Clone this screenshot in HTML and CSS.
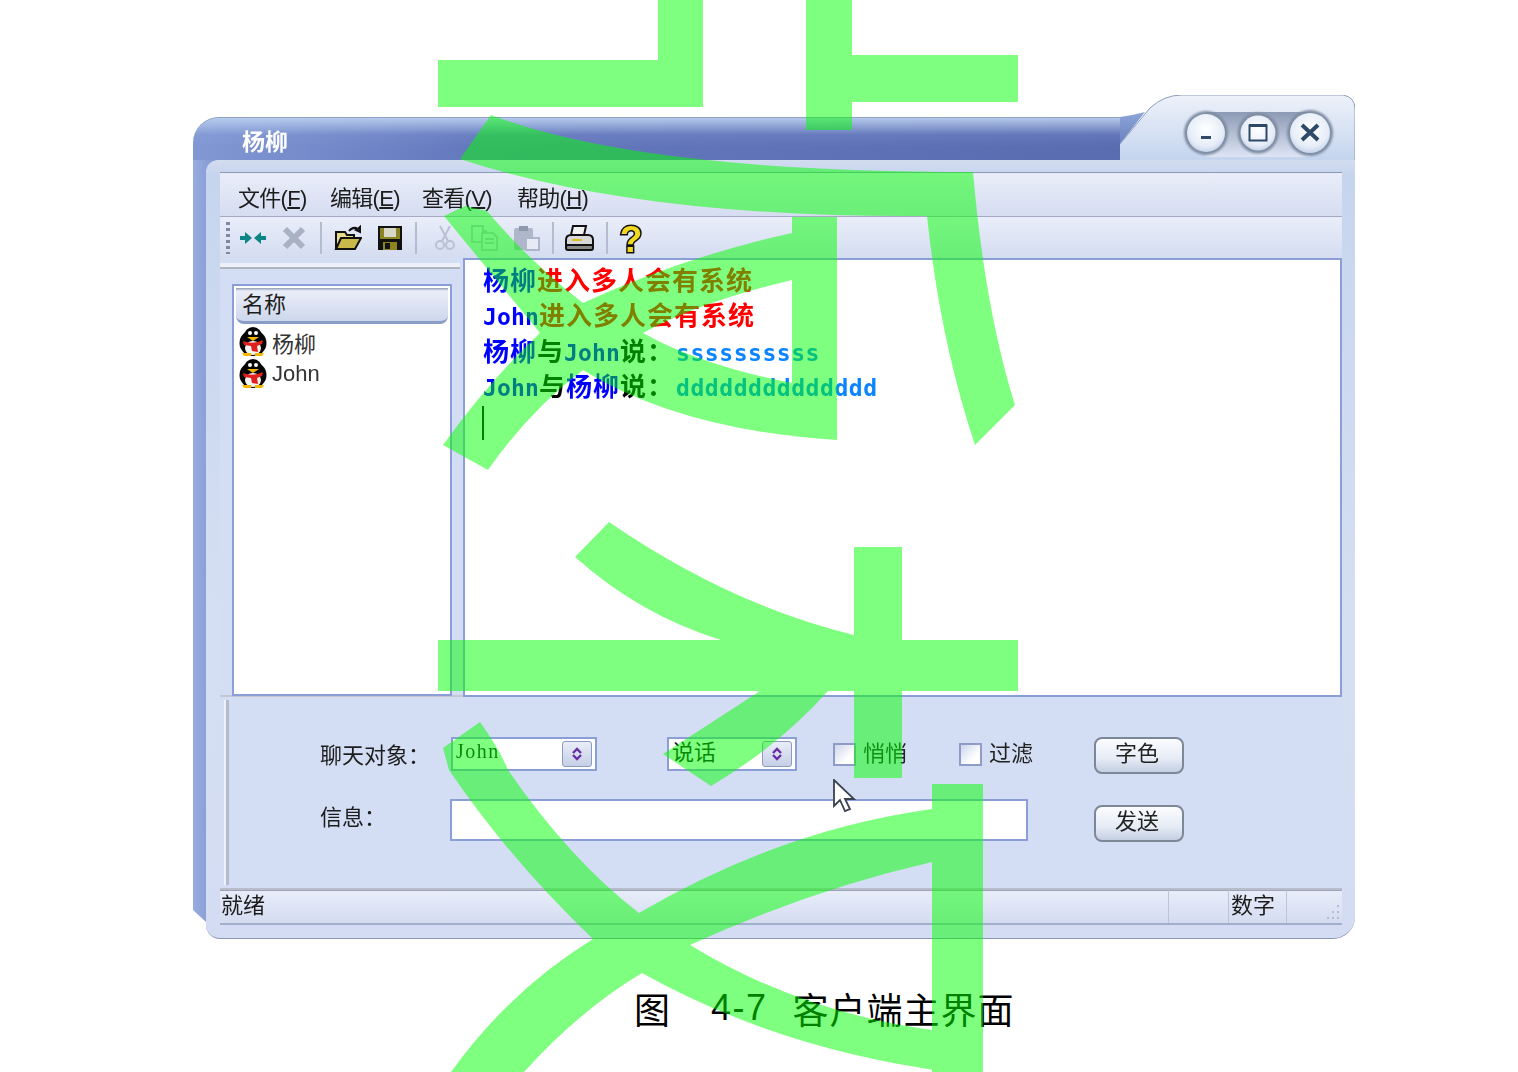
FILE: index.html
```html
<!DOCTYPE html>
<html lang="zh-CN">
<head>
  <meta charset="UTF-8">
  <title>客户端主界面</title>
  <link rel="stylesheet" href="styles.css">
</head>
<body>
  <svg width="0" height="0" class="defs">
    <symbol id="penguin" viewBox="0 0 28 30">
      <ellipse cx="14" cy="16" rx="13.500" ry="13" fill="#050505"/>
      <ellipse cx="14" cy="9" rx="9" ry="9" fill="#050505"/>
      <ellipse cx="14" cy="21" rx="8" ry="7" fill="#f4f4f4"/>
      <circle cx="11" cy="6" r="2" fill="#fff"/>
      <circle cx="17" cy="6" r="2" fill="#fff"/>
      <path d="M8 10h12l-6 4z" fill="#f2b705"/>
      <path d="M4 14q10 4 20-1l-1 4-5 2 1 6-6-1-1-5-7-1z" fill="#e0201c"/>
      <path d="M3 26h9v3H5zM16 26h9l-2 3h-7z" fill="#f2b705"/>
    </symbol>
    <symbol id="spin" viewBox="0 0 12 16">
      <path d="M2 7l4-4 4 4M2 9l4 4 4-4" fill="none" stroke="#6a2fa8" stroke-width="2.4"/>
    </symbol>
  </svg>

  <main class="window">
    <header class="titlebar">
      <div class="title">杨柳</div>
      <svg class="corner" width="235" height="65" viewBox="0 0 235 65">
        <defs>
          <linearGradient id="cornerFill" x1="0" y1="0" x2="0" y2="1">
            <stop offset="0" stop-color="#eef2fa"/>
            <stop offset="1" stop-color="#c4d4ee"/>
          </linearGradient>
          <linearGradient id="cornerBlue" x1="0" y1="0" x2="0" y2="1">
            <stop offset="0" stop-color="#8da6da"/>
            <stop offset="1" stop-color="#5a6cb0"/>
          </linearGradient>
          <linearGradient id="band" x1="0" y1="0" x2="0" y2="1">
            <stop offset="0" stop-color="#8d9ab5"/>
            <stop offset="1" stop-color="#dde5f5"/>
          </linearGradient>
          <radialGradient id="knob" cx=".5" cy=".4" r=".65">
            <stop offset="0" stop-color="#ffffff"/>
            <stop offset=".7" stop-color="#e6edf8"/>
            <stop offset="1" stop-color="#b9cbe6"/>
          </radialGradient>
          <filter id="soft" x="-20%" y="-20%" width="140%" height="140%"><feGaussianBlur stdDeviation="1.200"/></filter>
        </defs>
        <path d="M0 22 Q14 20 25 17 L0 49 V65 H0z" fill="url(#cornerBlue)"/>
        <path d="M0 65 V49 L30 13 Q44 0 62 0 H223 Q235 2 235 14 V65z" fill="url(#cornerFill)"/>
        <path d="M0 49 L30 13 Q44 0 62 0 H223 Q235 2 235 14 V65" fill="none" stroke="#8d9fbd"/>
        <rect x="86" y="17" width="104" height="45" fill="url(#band)"/>
        <g fill="#7f8da3" filter="url(#soft)">
          <circle cx="86" cy="38" r="22"/>
          <circle cx="138" cy="38" r="20.500"/>
          <circle cx="190" cy="38" r="23"/>
        </g>
        <circle cx="86" cy="38" r="19" fill="url(#knob)"/>
        <circle cx="138" cy="38" r="17.500" fill="url(#knob)"/>
        <circle cx="190" cy="38" r="20" fill="url(#knob)"/>
        <rect x="81" y="41" width="10" height="3" fill="#2f4a68"/>
        <rect x="129.500" y="30.500" width="17" height="15" fill="none" stroke="#2f4a68" stroke-width="2"/>
        <rect x="129" y="29" width="18" height="3" fill="#2f4a68"/>
        <path d="M182 30l16 15M198 30l-16 15" stroke="#2f4a68" stroke-width="4"/>
      </svg>
    </header>

    <div class="body">
      <div class="strip"></div>
      <div class="frame">
        <nav class="menubar">
          <span class="menu">文件(<u>F</u>)</span>
          <span class="menu">编辑(<u>E</u>)</span>
          <span class="menu">查看(<u>V</u>)</span>
          <span class="menu menu-last">帮助(<u>H</u>)</span>
        </nav>

        <div class="toolbar">
          <span class="grip"></span>
          <svg class="t-arrows" width="26" height="14" viewBox="0 0 26 14"><path d="M0 5h5V1l7 6-7 6V9H0zM26 5h-5V1l-7 6 7 6V9h5z" fill="#0b8585"/></svg>
          <svg class="t-del" width="24" height="24" viewBox="0 0 24 24"><path d="M3 3l18 18M21 3L3 21" stroke="#a9b2c2" stroke-width="6"/></svg>
          <span class="sep s-1"></span>
          <svg class="t-open" width="28" height="26" viewBox="0 0 28 26"><path d="M2 24V7h9l2 3h7v4" fill="#e8dc8a" stroke="#111" stroke-width="2"/><path d="M2 24l5-11h20l-6 11z" fill="#c9b84a" stroke="#111" stroke-width="2"/><path d="M15 6q4-5 9-2l-2 1 4 2 0-5-2 2" fill="none" stroke="#111" stroke-width="2"/></svg>
          <svg class="t-save" width="26" height="26" viewBox="0 0 26 26"><rect x="1" y="1" width="24" height="24" fill="#111"/><rect x="3" y="3" width="20" height="11" fill="#8c8420"/><rect x="7" y="3" width="12" height="9" fill="#d8d8c8"/><rect x="6" y="17" width="14" height="8" fill="#8c8420"/><rect x="8" y="18" width="5" height="6" fill="#111"/></svg>
          <span class="sep s-2"></span>
          <svg class="t-cut" width="20" height="26" viewBox="0 0 20 26"><path d="M5 1l8 15M15 1L7 16" stroke="#b9c1d2" stroke-width="2"/><circle cx="5" cy="20" r="4" fill="none" stroke="#b9c1d2" stroke-width="2"/><circle cx="15" cy="20" r="4" fill="none" stroke="#b9c1d2" stroke-width="2"/></svg>
          <svg class="t-copy" width="27" height="26" viewBox="0 0 27 26"><path d="M1 1h11v5h3v11H1z" fill="none" stroke="#b9c1d2" stroke-width="2"/><path d="M11 8h11l4 4v13H11z" fill="#dfe4f0" stroke="#b9c1d2" stroke-width="2"/><path d="M14 14h9M14 18h9" stroke="#b9c1d2" stroke-width="2"/></svg>
          <svg class="t-paste" width="27" height="26" viewBox="0 0 27 26"><rect x="1" y="3" width="19" height="22" rx="2" fill="#aeb7c9"/><rect x="6" y="1" width="9" height="5" fill="#8f99ad"/><rect x="13" y="13" width="13" height="12" fill="#e6eaf4" stroke="#aeb7c9" stroke-width="2"/></svg>
          <span class="sep s-3"></span>
          <svg class="t-print" width="30" height="26" viewBox="0 0 30 26"><path d="M9 1h13l-2 9H7z" fill="#f2f2f2" stroke="#111" stroke-width="2"/><path d="M2 15q0-5 5-5h17q5 0 5 5v5H2z" fill="#d8d8d8" stroke="#111" stroke-width="2"/><rect x="2" y="20" width="27" height="5" rx="2" fill="#888" stroke="#111" stroke-width="2"/><rect x="8" y="14" width="10" height="2" fill="#d8c020"/></svg>
          <span class="sep s-4"></span>
          <svg class="t-help" width="24" height="44" viewBox="0 0 24 44"><text x="12" y="35.500" class="help-mark" text-anchor="middle">?</text></svg>
        </div>

        <section class="workspace">
          <aside class="side">
            <div class="sash"></div>
            <div class="list">
              <div class="list-head">名称</div>
              <div class="list-row"><svg class="avatar" width="28" height="30"><use href="#penguin"/></svg>杨柳</div>
              <div class="list-row"><svg class="avatar" width="28" height="30"><use href="#penguin"/></svg>John</div>
            </div>
          </aside>
          <div class="chat">
            <p class="line"><b class="blue">杨柳</b><b class="red">进入多人会有系统</b></p>
            <p class="line"><b class="blue en">John</b><b class="red">进入多人会有系统</b></p>
            <p class="line"><b class="blue">杨柳</b><b>与</b><b class="blue en">John</b><b>说：</b><span class="msg">ssssssssss</span></p>
            <p class="line"><b class="blue en">John</b><b>与</b><b class="blue">杨柳</b><b>说：</b><span class="msg">dddddddddddddd</span></p>
            <div class="caret"></div>
          </div>
        </section>

        <section class="form">
          <div class="form-body">
            <div class="row row-top">
              <label class="label">聊天对象：</label>
              <div class="combo combo-who"><span class="combo-text mono">John</span><span class="spin"><svg width="12" height="16"><use href="#spin"/></svg></span></div>
              <div class="combo combo-act"><span class="combo-text">说话</span><span class="spin"><svg width="12" height="16"><use href="#spin"/></svg></span></div>
              <span class="check check-first"></span><span class="check-label">悄悄</span>
              <span class="check check-second"></span><span class="check-label">过滤</span>
              <button class="btn btn-color">字色</button>
            </div>
            <div class="row row-bottom">
              <label class="label label-short">信息：</label>
              <div class="input"></div>
              <button class="btn">发送</button>
            </div>
          </div>
        </section>

        <footer class="status">
          <div class="pane pane-main">就绪</div>
          <div class="pane pane-blank"></div>
          <div class="pane pane-num">数字</div>
          <div class="pane pane-grip">
            <svg width="22" height="20" viewBox="0 0 22 20"><path d="M17 2h2v2h-2zM12 8h2v2h-2zM17 8h2v2h-2zM7 14h2v2H7zM12 14h2v2h-2zM17 14h2v2h-2z" fill="#b4bdd0"/></svg>
          </div>
        </footer>
      </div>
    </div>
  </main>

  <div class="caption"><span class="cap-fig">图</span><span class="cap-num">4-7</span><span class="cap-name">客户端主界面</span></div>

  <svg class="pointer" width="26" height="36" viewBox="0 0 26 36"><path d="M1 1v26l6-6 5 11 5-2-5-10h9z" fill="#fff" stroke="#3a4250" stroke-width="1.800"/></svg>

  <!-- watermark bands lying over the whole page -->
  <svg class="stamp" width="1518" height="1072" viewBox="0 0 1518 1072">
    <path d="M438 60H658V0H703V107H438z"/>
    <path d="M806 0H852V55H1018V102H852V130H806z"/>
    <path d="M491 115Q640 172 973 172Q985 310 1015 405L975 445Q940 340 927 216Q640 218 460 159z"/>
    <path d="M792 217H837V440Q680 430 583 370Q560 352 540 333L444 216L465 206L487 211Q530 262 583 303Q612 322 643 333Q700 365 792 383z"/>
    <path d="M792 233Q680 258 583 303Q560 315 540 333Q490 380 443 445L488 470Q530 410 583 370Q610 350 643 333Q700 302 792 280z"/>
    <path d="M609 522L575 557Q640 615 721 640H438V691H1018V640H902V547H854V635Q730 605 609 522z"/>
    <path d="M854 691H902V778H854z"/>
    <path d="M760 691H828Q780 745 711 786L663 754z"/>
    <path d="M932 784H983V1072H932z"/>
    <path d="M443 748L480 722Q500 750 508 770Q570 860 639 913Q780 830 932 809V862Q810 890 690 945Q800 1012 932 1030L983 1038V1072H950Q780 1050 642 973Q580 1010 524 1072H451Q510 990 593 939Q510 860 449 770z"/>
  </svg>
</body>
</html>
```

FILE: styles.css
```css
html, body {
  margin: 0;
  padding: 0;
}

body {
  position: relative;
  width: 1518px;
  height: 1072px;
  overflow: hidden;
  background: #fff;
  color: #1c1c1c;
  font-family: "Liberation Sans", "Noto Sans CJK SC", sans-serif;
  font-size: 22px;
}

.defs {
  position: absolute;
}

.window {
  width: 1162px;
  margin: 95px 0 0 193px;
  filter: blur(0.4px);
}

/* title bar */
.titlebar {
  display: flex;
  height: 65px;
}

.title {
  flex: 1;
  margin-top: 22px;
  padding: 10px 0 0 49px;
  border-top: 1px solid #8da2c4;
  border-radius: 26px 0 0 0;
  background:
    linear-gradient(180deg, rgba(190, 210, 240, 0.9), rgba(150, 175, 225, 0.15) 40%, rgba(90, 108, 176, 0) 70%),
    linear-gradient(90deg, #8298d4, #6478bd 30%, #5a6cb0);
  color: #fff;
  font-size: 23px;
  font-weight: 700;
  line-height: 28px;
}

.corner {
  display: block;
  flex: none;
}

/* window body */
.body {
  display: flex;
  align-items: flex-start;
}

.strip {
  flex: none;
  width: 25px;
  height: 762px;
  margin-right: -12px;
  background: linear-gradient(90deg, #98addf, #7d94d2);
  clip-path: polygon(0 0, 100% 0, 100% 100%, 13px 100%, 0 750px);
}

.frame {
  position: relative;
  flex: 1;
  padding: 12px 13px 13px 14px;
  border-bottom: 1px solid #8797b5;
  border-radius: 12px 0 22px 14px;
  background: linear-gradient(180deg, #d3dcf0, #c6d5ee 2%, #d5dff3 60%, #d3dcf2);
}

/* menu */
.menubar {
  display: flex;
  gap: 23px;
  height: 43px;
  padding-left: 18px;
  border-top: 1px solid #8a9ab8;
  background: linear-gradient(180deg, #e9edf9, #d6ddf1);
  border-bottom: 1px solid #a4abc0;
  line-height: 52px;
}

.menu {
  width: 69px;
  letter-spacing: -0.700px;
  white-space: nowrap;
}

.menu-last {
  margin-left: 3px;
}

.menu u {
  text-underline-offset: 1px;
}

/* toolbar */
.toolbar {
  display: flex;
  align-items: center;
  height: 41px;
  padding-left: 6px;
  background: linear-gradient(180deg, #eaeefa, #d4dcf0);
}

.grip {
  width: 4px;
  height: 32px;
  background: repeating-linear-gradient(180deg, #7f8aa0 0 3px, transparent 3px 6px);
}

.sep {
  width: 2px;
  height: 32px;
  background: #b4bccd;
}

.t-arrows { margin-left: 10px; }
.t-del { margin-left: 16px; }
.s-1 { margin-left: 14px; }
.t-open { margin-left: 12px; }
.t-save { margin-left: 15px; }
.s-2 { margin-left: 12px; }
.t-cut { margin-left: 18px; }
.t-copy { margin-left: 16px; }
.t-paste { margin-left: 15px; }
.s-3 { margin-left: 12px; }
.t-print { margin-left: 10px; }
.s-4 { margin-left: 12px; }
.t-help { margin-left: 11px; }

.help-mark {
  fill: #f2d820;
  stroke: #111;
  stroke-width: 3px;
  paint-order: stroke;
  font-family: "Liberation Sans", sans-serif;
  font-size: 37px;
  font-weight: 700;
}

/* list + chat */
.workspace {
  display: flex;
  height: 439px;
}

.side {
  flex: none;
  width: 243px;
  padding: 5px 0 0 0;
  box-sizing: border-box;
  background: #d3ddf3;
  border-bottom: 2px solid #c3c8d4;
}

.sash {
  height: 4px;
  margin: 0 3px 15px 0;
  background: #edf0f9;
  border-bottom: 2px solid #b0b4bf;
}

.list {
  box-sizing: border-box;
  width: 220px;
  height: 412px;
  margin-left: 12px;
  padding: 2px;
  border: 2px solid #8c9ed8;
  background: #fff;
}

.list-head {
  box-sizing: border-box;
  height: 36px;
  margin-bottom: 2px;
  padding-left: 6px;
  border-bottom: 3px solid #8a9cc8;
  border-radius: 0 0 8px 8px;
  background: linear-gradient(180deg, #8f9bb5 0, #e9edf7 3px, #cdd7ec);
  line-height: 33px;
}

.list-row {
  display: flex;
  align-items: center;
  height: 32px;
  padding-left: 3px;
  color: #333;
}

.avatar {
  flex: none;
  margin-right: 5px;
}

.chat {
  flex: 1;
  box-sizing: border-box;
  padding: 1px 0 0 18px;
  border: 2px solid #8c9ed8;
  background: #fff;
  color: #000;
  font-family: "Noto Sans CJK SC", sans-serif;
  font-size: 26px;
}

.line {
  margin: 0;
  height: 35.300px;
  line-height: 35px;
  letter-spacing: 1px;
  white-space: nowrap;
}

.blue { color: #0000ff; }
.red { color: #ff0000; }

.en, .msg {
  font-family: "DejaVu Sans Mono", monospace;
  font-size: 23px;
  letter-spacing: 0.150px;
}

.msg {
  margin-left: 2px;
  font-weight: 700;
  letter-spacing: 0.550px;
  color: #0a84ff;
}

.caret {
  width: 2px;
  height: 34px;
  margin: 4px 0 0 -1px;
  background: #000;
}

/* bottom form */
.form {
  box-sizing: border-box;
  height: 191px;
  padding: 3px 0 3px 6px;
  background: #d3ddf3;
}

.form-body {
  box-sizing: border-box;
  height: 100%;
  padding: 37px 0 0 91px;
  border-left: 3px solid #b3bccd;
  box-shadow: -2px 0 0 #eef1f9;
}

.row {
  display: flex;
  align-items: flex-start;
}

.row-top { height: 37px; }
.row-bottom { height: 42px; margin-top: 25px; }

.label {
  flex: none;
  width: 131px;
  font-family: "Noto Sans CJK TC", sans-serif;
  line-height: 32px;
  white-space: nowrap;
}

.label-short {
  width: 130px;
}

.combo {
  box-sizing: border-box;
  display: flex;
  align-items: center;
  height: 34px;
  padding: 2px 3px 2px 3px;
  border: 2px solid #8c9ed8;
  background: #fff;
}

.combo-who { width: 146px; }
.combo-act { width: 130px; margin-left: 70px; }

.combo-text {
  flex: 1;
  margin-top: -5px;
  color: #111;
}

.combo-act .combo-text {
  margin-top: -9px;
}

.mono {
  font-family: "Liberation Serif", serif;
  font-size: 20px;
  letter-spacing: 1.500px;
}

.spin {
  display: flex;
  align-items: center;
  justify-content: center;
  box-sizing: border-box;
  width: 30px;
  height: 26px;
  border: 1px solid #8c9bc0;
  border-radius: 3px;
  background: linear-gradient(180deg, #e9edf8, #c6cfe6);
}

.check {
  box-sizing: border-box;
  flex: none;
  width: 23px;
  height: 23px;
  margin-top: 6px;
  border: 2px solid #8f9dc6;
  background: linear-gradient(135deg, #ccd6ec, #fff 70%);
}

.check-first { margin-left: 36px; }
.check-second { margin-left: 52px; }

.check-label {
  flex: none;
  margin-left: 7px;
  color: #222;
  line-height: 34px;
  white-space: nowrap;
}

.btn {
  flex: none;
  box-sizing: border-box;
  width: 90px;
  height: 37px;
  padding: 0 4px 3px 0;
  border: 2px solid #7c8798;
  border-radius: 8px;
  background: linear-gradient(180deg, #fbfcfe, #e6ebf5 60%, #c4cfe2);
  color: #222;
  font: inherit;
  line-height: 20px;
}

.btn-color { margin-left: 61px; }

.row-bottom .btn { margin-top: 6px; margin-left: 66px; }

.input {
  box-sizing: border-box;
  flex: none;
  width: 578px;
  height: 42px;
  border: 2px solid #8c9ed8;
  background: #fff;
}

/* status bar */
.status {
  display: flex;
  box-sizing: border-box;
  height: 37px;
  border-top: 2px solid #b9bdc9;
  border-bottom: 2px solid #a3aecb;
  box-shadow: inset 0 1px 0 #98a3bc;
  background: linear-gradient(180deg, #e9edf9, #d4dcf1);
}

.pane {
  box-sizing: border-box;
  border-left: 1px solid #bcc5d8;
  line-height: 31px;
}

.pane-main { flex: 1; border-left: 0; padding-left: 1px; }
.pane-blank { width: 60px; }
.pane-num { width: 58px; padding-left: 2px; }

.pane-grip {
  display: flex;
  align-items: flex-end;
  justify-content: flex-end;
  width: 56px;
}

/* caption */
.caption {
  display: flex;
  margin: 47px 0 0 634px;
  color: #000;
  font-family: "Noto Sans CJK SC", sans-serif;
  font-size: 36px;
  line-height: 44px;
}

.cap-num {
  margin-left: 41px;
  font-family: "Liberation Sans", sans-serif;
  letter-spacing: 1.500px;
}

.cap-name {
  margin-left: 25px;
  letter-spacing: 1px;
}

/* things lying over the page */
.pointer {
  position: absolute;
  left: 833px;
  top: 779px;
}

.stamp {
  position: absolute;
  left: 0;
  top: 0;
  opacity: 0.5;
  fill: #00ff00;
  pointer-events: none;
}
```
